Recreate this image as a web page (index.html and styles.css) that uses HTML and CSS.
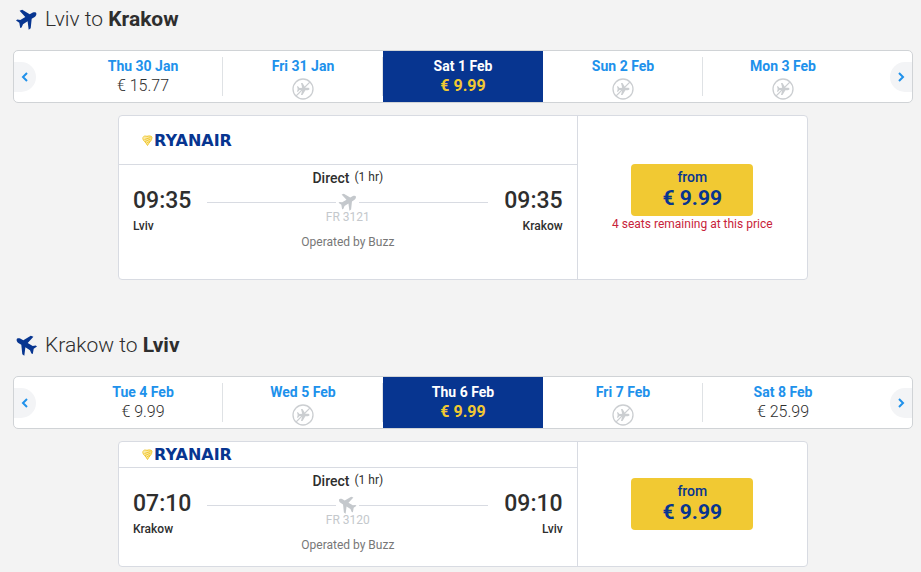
FILE: index.html
```html
<!DOCTYPE html>
<html lang="en">
<head>
<meta charset="utf-8">
<title>Select flights</title>
<link rel="stylesheet" href="styles.css">
</head>
<body>
<svg class="defs" aria-hidden="true">
  <symbol id="plane" viewBox="0 0 21 21">
    <path d="M20.300 4.200C20 3 18.300 2.900 16.800 3.600L13.700 5.200 6.200.8 3.600 1.700 9.300 8 4.300 10.900 1.300 10.400 0 11.400 3.300 13.800 4.200 19 5.600 18.600 7 15.200 11.600 12.300 12.700 20.700 14.700 19.300 15.700 9.800 18.700 7.900C19.900 7 20.700 5.500 20.300 4.200z"/>
  </symbol>
  <symbol id="no-flight" viewBox="0 0 22 22">
    <circle cx="11" cy="11" r="10" fill="none" stroke="currentColor" stroke-width="1.300"/>
    <path fill="currentColor" d="M17.500 11c0-.7-.8-1.200-1.700-1.200h-2.400L10.500 5H9l1.200 4.800-2.700.2L6 8.200H5L5.700 11 5 13.800h1l1.500-1.800 2.700.2L9 17h1.500l2.900-4.800h2.400c.9 0 1.700-.5 1.700-1.200z"/>
    <path d="M3.900 18.100 18.100 3.900" stroke="currentColor" stroke-width="1.300"/>
  </symbol>
  <symbol id="harp" viewBox="0 0 11 11">
    <path d="M1 3C3 0 8 0 10 2 10 6 7 8 5.500 10.500 4 8 1 6 1 3z" fill="#fbe9a6"/>
    <path d="M.8 3.500C1 .8 3 .7 5 1.500 7 .8 9 .8 10 2 10.200 6 7 7 5.500 10.500M.8 3.500C1 6 4 7 5.500 10.500M2.500 4.500 8.500 2.500M3 6.500 8.800 4M4.500 8.200 8 6" fill="none" stroke="#f1c933"/>
  </symbol>
  <symbol id="chevron" viewBox="0 0 8 10">
    <path d="M2 1 6 5 2 9" fill="none" stroke="currentColor" stroke-width="2"/>
  </symbol>
</svg>

<main class="page">
  <section class="journey">
    <h2 class="route"><svg class="route-icon"><use href="#plane"/></svg><span>Lviv to <b>Krakow</b></span></h2>
    <div class="dates">
      <button class="arrow arrow-prev" type="button" aria-label="Earlier dates"><svg class="chevron flip"><use href="#chevron"/></svg></button>
      <div class="days">
        <button class="day" type="button"><span class="date">Thu 30 Jan</span><span class="fare">€ 15.77</span></button>
        <button class="day" type="button"><span class="date">Fri 31 Jan</span><svg class="none"><use href="#no-flight"/></svg></button>
        <button class="day selected" type="button"><span class="date">Sat 1 Feb</span><span class="fare">€ 9.99</span></button>
        <button class="day" type="button"><span class="date">Sun 2 Feb</span><svg class="none"><use href="#no-flight"/></svg></button>
        <button class="day" type="button"><span class="date">Mon 3 Feb</span><svg class="none"><use href="#no-flight"/></svg></button>
      </div>
      <button class="arrow arrow-next" type="button" aria-label="Later dates"><svg class="chevron"><use href="#chevron"/></svg></button>
    </div>
    <article class="flight roomy">
      <div class="details">
        <div class="carrier"><svg class="harp"><use href="#harp"/></svg><span>RYANAIR</span></div>
        <div class="leg">
          <div class="stop"><span class="time">09:35</span><span class="city">Lviv</span></div>
          <div class="middle">
            <div class="kind"><span class="direct">Direct</span><span class="duration">(1 hr)</span></div>
            <div class="track"><svg class="track-icon"><use href="#plane"/></svg></div>
            <div class="number">FR 3121</div>
            <div class="operator">Operated by Buzz</div>
          </div>
          <div class="stop arrival"><span class="time">09:35</span><span class="city">Krakow</span></div>
        </div>
      </div>
      <div class="price">
        <button class="buy" type="button"><span class="from">from</span><span class="amount">€ 9.99</span></button>
        <p class="seats">4 seats remaining at this price</p>
      </div>
    </article>
  </section>

  <section class="journey">
    <h2 class="route"><svg class="route-icon flip"><use href="#plane"/></svg><span>Krakow to <b>Lviv</b></span></h2>
    <div class="dates">
      <button class="arrow arrow-prev" type="button" aria-label="Earlier dates"><svg class="chevron flip"><use href="#chevron"/></svg></button>
      <div class="days">
        <button class="day" type="button"><span class="date">Tue 4 Feb</span><span class="fare">€ 9.99</span></button>
        <button class="day" type="button"><span class="date">Wed 5 Feb</span><svg class="none"><use href="#no-flight"/></svg></button>
        <button class="day selected" type="button"><span class="date">Thu 6 Feb</span><span class="fare">€ 9.99</span></button>
        <button class="day" type="button"><span class="date">Fri 7 Feb</span><svg class="none"><use href="#no-flight"/></svg></button>
        <button class="day" type="button"><span class="date">Sat 8 Feb</span><span class="fare">€ 25.99</span></button>
      </div>
      <button class="arrow arrow-next" type="button" aria-label="Later dates"><svg class="chevron"><use href="#chevron"/></svg></button>
    </div>
    <article class="flight">
      <div class="details">
        <div class="carrier"><svg class="harp"><use href="#harp"/></svg><span>RYANAIR</span></div>
        <div class="leg">
          <div class="stop"><span class="time">07:10</span><span class="city">Krakow</span></div>
          <div class="middle">
            <div class="kind"><span class="direct">Direct</span><span class="duration">(1 hr)</span></div>
            <div class="track"><svg class="track-icon flip"><use href="#plane"/></svg></div>
            <div class="number">FR 3120</div>
            <div class="operator">Operated by Buzz</div>
          </div>
          <div class="stop arrival"><span class="time">09:10</span><span class="city">Lviv</span></div>
        </div>
      </div>
      <div class="price">
        <button class="buy" type="button"><span class="from">from</span><span class="amount">€ 9.99</span></button>
      </div>
    </article>
  </section>
</main>
</body>
</html>
```
FILE: styles.css
```css
* {
  box-sizing: border-box;
}

body {
  margin: 0;
  background: #f3f3f3;
  color: #2e2e2e;
  font-family: Roboto, "Liberation Sans", sans-serif;
  font-size: 14px;
}

button {
  margin: 0;
  padding: 0;
  border: 0;
  background: none;
  color: inherit;
  font: inherit;
  cursor: pointer;
}

.defs {
  display: none;
}

.flip {
  transform: scaleX(-1);
}

.page {
  display: flex;
  flex-direction: column;
  gap: 46px;
  padding: 0 8px 4px 13px;
}

/* Route heading */

.route {
  display: flex;
  align-items: center;
  gap: 8px;
  height: 38px;
  margin: 0 0 12px;
  padding-left: 3px;
  font-size: 21px;
  font-weight: 300;
}

.route b {
  font-weight: 700;
}

.route-icon {
  width: 21px;
  height: 21px;
  fill: #073590;
}

/* Date strip */

.dates {
  display: flex;
  justify-content: space-between;
  align-items: center;
  height: 53px;
  border: 1px solid #d0d3d6;
  border-radius: 5px;
  background: #fff;
}

.arrow {
  display: flex;
  align-items: center;
  justify-content: center;
  width: 22px;
  height: 30px;
  background: #f3f4f6;
  color: #2091eb;
}

.arrow-prev {
  border-radius: 0 15px 15px 0;
}

.arrow-next {
  border-radius: 15px 0 0 15px;
}

.chevron {
  width: 8px;
  height: 10px;
}

.days {
  display: grid;
  grid-template-columns: repeat(5, 1fr);
  flex: 1;
  align-self: stretch;
  margin: 0 27px;
}

.day {
  display: flex;
  flex-direction: column;
  align-items: center;
  padding-top: 5px;
  background: linear-gradient(#dfe2e5, #dfe2e5) right center / 1px 39px no-repeat;
}

.day:last-child {
  background: none;
}

.date {
  color: #2091eb;
  font-weight: 700;
  line-height: 20px;
}

.fare {
  font-size: 16px;
  font-weight: 300;
  line-height: 20px;
}

.none {
  width: 22px;
  height: 22px;
  margin-top: 2px;
  color: #cbced1;
}

.selected {
  background: #073590;
}

.selected .date {
  color: #fff;
}

.selected .fare {
  color: #f1c933;
  font-weight: 700;
}

/* Flight card */

.flight {
  display: grid;
  grid-template-columns: 2fr 1fr;
  max-width: 690px;
  margin: 12px auto 0;
  border: 1px solid #d8dbe2;
  border-radius: 4px;
  background: #fff;
}

.details {
  border-right: 1px solid #d8dbe2;
}

.carrier {
  display: flex;
  align-items: center;
  gap: 1px;
  height: 26px;
  padding-left: 23px;
  border-bottom: 1px solid #d8dbe2;
  color: #073590;
  font-family: "DejaVu Sans", sans-serif;
  font-size: 16px;
  font-weight: 700;
}

.harp {
  width: 11px;
  height: 11px;
}

.leg {
  display: flex;
  gap: 16px;
  padding: 4px 14px 12px;
}

.roomy .carrier {
  height: 49px;
}

.roomy .leg {
  padding-bottom: 28px;
}

.stop {
  display: flex;
  flex-direction: column;
  padding-top: 18px;
}

.arrival {
  align-items: flex-end;
}

.time {
  font-size: 23px;
  font-weight: 500;
  line-height: 28px;
}

.city {
  font-size: 12px;
  font-weight: 500;
  line-height: 22px;
}

.middle {
  flex: 1;
  font-size: 12px;
  text-align: center;
}

.kind {
  display: flex;
  justify-content: center;
  gap: 5px;
  line-height: 18px;
}

.direct {
  font-size: 14px;
  font-weight: 500;
}

.duration {
  line-height: 17px;
}

.track {
  display: flex;
  align-items: center;
  gap: 2px;
  margin-top: 6px;
}

.track::before,
.track::after {
  content: "";
  flex: 1;
  height: 1px;
  background: #d8dbe2;
}

.track-icon {
  width: 19px;
  height: 18px;
  fill: #c4c8cc;
}

.number {
  color: #c4c8cc;
  line-height: 12px;
}

.operator {
  margin-top: 10px;
  color: #777;
  line-height: 18px;
}

/* Price */

.price {
  display: flex;
  flex-direction: column;
  align-items: center;
  justify-content: center;
}

.buy {
  display: flex;
  flex-direction: column;
  align-items: center;
  justify-content: center;
  width: 122px;
  height: 52px;
  padding-bottom: 2px;
  border-radius: 4px;
  background: #f1c933;
  color: #073590;
  font-weight: 500;
}

.from {
  line-height: 18px;
}

.amount {
  font-size: 21px;
  font-weight: 700;
  line-height: 24px;
}

.seats {
  margin: 0;
  color: #c8233a;
  font-size: 12px;
  line-height: 16px;
}
```
